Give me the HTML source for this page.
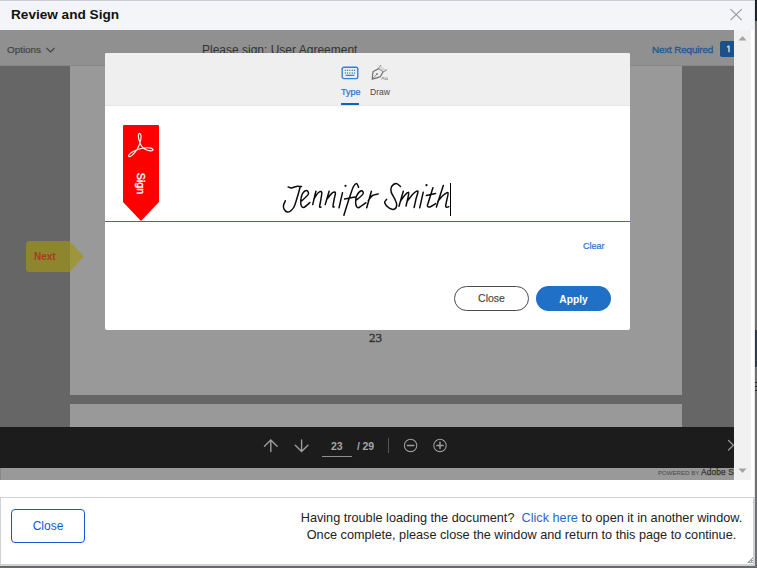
<!DOCTYPE html>
<html><head><meta charset="utf-8">
<style>
*{margin:0;padding:0;box-sizing:border-box;}
html,body{width:757px;height:568px;overflow:hidden;background:#fff;}
body{position:relative;font-family:"Liberation Sans",sans-serif;}
.a{position:absolute;}
</style></head><body>
<!-- window borders -->
<div class="a" style="left:0;top:0;width:757px;height:1px;background:#c9cdd4"></div>
<div class="a" style="left:0;top:1px;width:755px;height:29px;background:#f4f5f9"></div>
<div class="a" style="left:11px;top:5px;font-size:13.6px;font-weight:bold;color:#111;line-height:20px">Review and Sign</div>
<svg class="a" style="left:729px;top:8px" width="14" height="14" viewBox="0 0 14 14"><path d="M1.5 1.2L12.8 12.2M12.8 1.2L1.5 12.2" stroke="#9598a0" stroke-width="1.1" fill="none"/></svg>

<!-- content area -->
<div class="a" style="left:0;top:30px;width:734px;height:450px;background:#666;overflow:hidden">
  <div class="a" style="left:0;top:0;width:734px;height:36px;background:#909090;border-bottom:1px solid #878787"></div>
  <div class="a" style="left:7px;top:12.5px;font-size:9.9px;color:#444;line-height:14px;-webkit-text-stroke:.2px #444">Options</div>
  <svg class="a" style="left:45px;top:15.5px" width="11" height="8" viewBox="0 0 11 8"><path d="M1.5 2L5.5 6L9.5 2" stroke="#444" stroke-width="1.2" fill="none"/></svg>
  <div class="a" style="left:202px;top:12px;font-size:12px;color:#333;line-height:16px">Please sign: User Agreement</div>
  <div class="a" style="left:652px;top:13px;font-size:9.9px;-webkit-text-stroke:.3px #1f5792;color:#1f5792;line-height:14px;letter-spacing:-.15px">Next Required</div>
  <div class="a" style="left:720px;top:11px;width:22px;height:16px;background:#1c5088;border-radius:2px"></div><svg class="a" style="left:720px;top:11px" width="14" height="16" viewBox="0 0 14 16"><path d="M9 4.8V11.2M7.1 6.2L9 4.8" stroke="#c9d2de" stroke-width="1.45" fill="none"/></svg>

  <div class="a" style="left:70px;top:36px;width:612px;height:329px;background:#999"></div>
  <div class="a" style="left:70px;top:374px;width:612px;height:30px;background:#999"></div>
  <div class="a" style="left:369px;top:301px;font-family:'Liberation Serif',serif;font-size:13px;-webkit-text-stroke:.35px #333;color:#333;line-height:14px">23</div>

  <!-- Next tag -->
  <svg class="a" style="left:26px;top:211px" width="60" height="32" viewBox="0 0 60 32"><path d="M3.5 0H43.5L58 15.5L43.5 31H3.5Q0 31 0 27.5V3.5Q0 0 3.5 0Z" fill="rgb(160,148,24)" fill-opacity="0.7"/></svg>
  <div class="a" style="left:34px;top:219.5px;font-size:10px;font-weight:bold;color:#a83b1f;line-height:13px">Next</div>

  <!-- bottom toolbar -->
  <div class="a" style="left:0;top:397px;width:734px;height:41px;background:#1c1c1c"></div>
  <div class="a" style="left:0;top:438px;width:734px;height:12px;background:#999;border-left:1px solid #888"></div>
  <div class="a" style="left:658px;top:436px;font-size:6.1px;color:#4a4a4a;line-height:12px;white-space:nowrap">POWERED BY&nbsp;<span style="font-size:8.4px;color:#333;letter-spacing:.1px;-webkit-text-stroke:.25px #333">Adobe Sign</span></div>
</div>

<!-- scrollbar -->
<div class="a" style="left:734px;top:30px;width:17px;height:450px;background:#f1f1f1"></div>
<svg class="a" style="left:737px;top:34px" width="11" height="8" viewBox="0 0 11 8"><path d="M1.5 6.5L5.5 2L9.5 6.5Z" fill="#a3a3a3"/></svg>
<svg class="a" style="left:737px;top:467px" width="11" height="8" viewBox="0 0 11 8"><path d="M1.5 1.5L5.5 6L9.5 1.5Z" fill="#a3a3a3"/></svg>
<div class="a" style="left:755px;top:0;width:2px;height:568px;background:#707070"></div>
<div class="a" style="left:755px;top:0;width:2px;height:21px;background:#1b222c"></div>
<div class="a" style="left:755px;top:330px;width:2px;height:37px;background:#2b3b4b"></div>
<div class="a" style="left:755px;top:382px;width:2px;height:1px;background:#222"></div><div class="a" style="left:755px;top:386px;width:2px;height:1px;background:#222"></div><div class="a" style="left:755px;top:390px;width:2px;height:1px;background:#222"></div>
<div class="a" style="left:754px;top:1px;width:1px;height:496px;background:#e4e7ec"></div>

<!-- modal -->
<div class="a" style="left:105px;top:53px;width:525px;height:277px;background:#fff;border-radius:2px;overflow:hidden">
  <div class="a" style="left:0;top:0;width:525px;height:53px;background:#efefef;border-bottom:1px solid #e6e6e6"></div>
  <div class="a" style="left:236px;top:34px;font-size:9px;color:#2b6fcf;line-height:11px;-webkit-text-stroke:.2px #2b6fcf">Type</div>
  <div class="a" style="left:265px;top:34px;font-size:8.6px;color:#4b4b4b;line-height:11px">Draw</div>
  <div class="a" style="left:236px;top:50px;width:18px;height:2px;background:#0b63c5"></div>
  <div class="a" style="left:0;top:168px;width:525px;height:1px;background:#2170cc"></div>
  <div class="a" style="left:478px;top:187px;font-size:9px;color:#2b6fcf;line-height:13px;-webkit-text-stroke:.2px #2b6fcf">Clear</div>
  <div class="a" style="left:349px;top:233px;width:75px;height:25px;border:1px solid #4b4b4b;border-radius:13px;font-size:10.5px;color:#444;text-align:center;line-height:23px;-webkit-text-stroke:.15px #444">Close</div>
  <div class="a" style="left:431px;top:233px;width:75px;height:25px;background:#2170c8;border-radius:13px;font-size:10.2px;font-weight:bold;color:#fff;text-align:center;line-height:27px">Apply</div>
</div>

<!-- signature -->
<svg class="a" style="left:0;top:0" width="757" height="568" viewBox="0 0 757 568">
<path d="M288.1 186.9C288.7 187.1 290.1 188.1 291.5 188.0C292.9 187.9 294.8 186.6 296.5 186.4C298.2 186.2 300.7 186.6 301.5 186.6M300.1 187.2C299.7 188.7 298.6 192.9 297.6 196.2C296.6 199.5 295.3 204.3 294.1 206.8C292.9 209.3 291.8 210.1 290.6 211.0C289.4 211.9 288.1 212.3 287.0 212.0C285.9 211.7 284.5 210.0 283.9 208.9C283.3 207.8 283.3 206.8 283.5 205.4C283.7 204.1 285.0 201.6 285.3 200.8M301.8 200.8C302.9 199.7 307.5 196.0 308.3 194.3C309.1 192.6 307.6 190.7 306.6 190.6C305.6 190.5 303.5 192.1 302.5 193.7C301.5 195.3 301.0 198.3 300.8 200.4C300.6 202.5 300.9 204.9 301.5 206.1C302.1 207.2 302.9 207.9 304.3 207.3C305.7 206.7 309.0 203.3 309.9 202.5M315.9 191.3L312.7 204.6M313.8 199.0C314.6 197.9 317.2 193.6 318.5 192.5C319.8 191.4 321.3 190.9 321.7 192.3C322.1 193.7 321.0 198.7 320.6 201.1C320.2 203.5 319.5 205.8 319.6 206.8C319.7 207.8 320.8 207.1 321.0 207.1M329.1 191.3L325.2 204.6M326.6 199.7C327.5 198.6 330.5 194.4 332.0 193.2C333.5 192.0 335.1 191.6 335.4 192.7C335.7 193.8 334.4 197.7 334.0 200.0C333.6 202.3 333.0 205.2 333.0 206.4C333.0 207.6 334.0 206.9 334.2 207.0M342.5 192.7L339.0 207.8M358.6 187.3C358.3 186.7 357.5 183.5 356.6 183.4C355.8 183.3 354.7 184.1 353.5 186.5C352.3 188.9 351.1 192.8 349.5 197.6C347.9 202.4 344.8 212.3 343.9 215.2M344.6 199.0L355.0 196.9M355.9 200.5C357.1 199.4 362.1 195.6 363.0 194.0C363.9 192.4 362.4 190.5 361.3 190.8C360.2 191.1 357.6 193.9 356.6 195.8C355.7 197.7 355.6 200.3 355.6 202.1C355.6 203.9 355.9 205.6 356.5 206.5C357.1 207.4 357.4 208.1 359.0 207.5C360.6 206.9 364.8 203.6 365.9 202.8M371.4 191.2L366.7 207.8M368.3 200.5C369.0 199.7 370.8 196.6 372.5 195.5C374.2 194.4 377.3 194.2 378.3 193.9M400.5 186.5C399.8 186.0 397.8 183.4 396.3 183.4C394.8 183.4 392.5 185.1 391.6 186.5C390.8 187.9 390.7 189.9 391.2 192.0C391.7 194.1 393.8 196.8 394.7 198.9C395.6 201.0 396.7 202.7 396.7 204.4C396.7 206.1 395.9 208.4 394.7 209.0C393.5 209.6 391.0 209.2 389.3 208.2C387.6 207.2 385.1 204.3 384.7 202.8C384.2 201.3 386.3 199.9 386.6 199.3M403.3 191.2L399.0 206.3M400.9 200.5C401.7 199.5 404.2 195.8 405.5 194.5C406.8 193.2 408.4 191.7 408.7 192.7C409.0 193.7 407.8 198.3 407.3 200.5C406.9 202.7 406.2 205.1 406.0 206.0M407.1 201.3C408.2 200.0 411.7 195.2 413.5 193.5C415.3 191.8 417.6 190.3 418.0 191.2C418.4 192.1 416.6 196.3 416.0 199.0C415.4 201.7 414.4 206.1 414.1 207.5M423.2 192.3L419.7 207.8M432.9 187.7C432.2 190.1 429.4 199.0 428.5 202.0C427.6 205.0 427.2 205.1 427.4 205.9C427.6 206.7 428.4 207.4 429.8 207.0C431.2 206.6 434.6 204.2 435.6 203.6M426.3 195.4L435.6 193.5M443.3 185.4L436.4 207.1M437.9 201.3C438.8 200.2 441.8 196.4 443.5 195.0C445.2 193.6 447.4 191.9 448.0 192.7C448.6 193.5 447.2 197.9 446.8 200.0C446.4 202.1 445.8 204.3 445.7 205.5C445.6 206.7 446.0 207.1 446.5 207.3C447.0 207.5 448.4 206.8 448.8 206.7" fill="none" stroke="#0a0a0a" stroke-width="1.5" stroke-linecap="round" stroke-linejoin="round"/>
<circle cx="345.5" cy="185.8" r="1.1" fill="#0a0a0a"/><circle cx="426.5" cy="185.2" r="1.1" fill="#0a0a0a"/>
<rect x="450" y="183" width="1" height="33" fill="#000"/>
</svg>
<!-- sign banner -->
<svg class="a" style="left:123px;top:125px" width="36" height="96" viewBox="0 0 36 96">
<path d="M1 0H35Q36 0 36 1V77L18 96L0 77V1Q0 0 1 0Z" fill="#fe0000"/>
<path d="M16.4 8.2C16.6 8.5 17.7 8.9 17.9 10.0C18.1 11.1 18.1 12.8 17.8 14.5C17.5 16.2 17.0 18.1 16.2 20.0C15.4 21.9 14.3 24.2 13.2 25.8C12.1 27.4 10.6 28.8 9.5 29.8C8.4 30.8 7.5 31.4 6.8 31.6C6.1 31.8 5.6 31.4 5.6 31.0C5.6 30.6 5.8 29.9 6.6 29.2C7.4 28.5 8.7 27.4 10.2 26.6C11.7 25.8 13.7 24.9 15.5 24.3C17.3 23.7 19.2 23.2 21.0 23.0C22.8 22.8 25.0 22.7 26.5 22.9C28.0 23.1 29.5 23.8 29.9 24.3C30.3 24.8 29.7 25.5 28.8 25.7C27.9 25.9 25.9 25.8 24.5 25.3C23.1 24.8 21.3 23.8 20.2 22.8C19.1 21.8 18.3 20.9 17.6 19.4C16.9 17.9 16.2 15.6 15.8 14.0C15.4 12.4 15.3 11.0 15.4 10.0C15.5 9.0 16.2 8.5 16.4 8.2" fill="none" stroke="#fff" stroke-width="1.1"/>
</svg>
<div class="a" style="left:128.5px;top:177px;width:22px;height:13px;transform:rotate(90deg);transform-origin:11px 6.5px;font-size:10.8px;color:#fff;-webkit-text-stroke:.35px #fff;line-height:13px;text-align:center">Sign</div>
<!-- type/draw icons -->
<svg class="a" style="left:341px;top:66px" width="18" height="14" viewBox="0 0 18 14">
<rect x="1.2" y="1.2" width="15.6" height="11.4" rx="1.8" fill="none" stroke="#3b80d0" stroke-width="1.4"/>
<g fill="#3b80d0"><rect x="3.80" y="3.70" width="1.2" height="1.3"/><rect x="5.90" y="3.70" width="1.2" height="1.3"/><rect x="8.20" y="3.70" width="1.2" height="1.3"/><rect x="10.70" y="3.70" width="1.2" height="1.3"/><rect x="12.90" y="3.70" width="1.2" height="1.3"/><rect x="3.80" y="6.40" width="1.2" height="1.3"/><rect x="5.90" y="6.40" width="1.2" height="1.3"/><rect x="8.20" y="6.40" width="1.2" height="1.3"/><rect x="10.70" y="6.40" width="1.2" height="1.3"/><rect x="12.90" y="6.40" width="1.2" height="1.3"/><rect x="4.6" y="8.8" width="8.8" height="1.3" rx=".6"/></g>
</svg>
<svg class="a" style="left:366px;top:60px" width="28" height="24" viewBox="366 60 28 24">
<path d="M372.2 79.2Q372.5 74 373.2 71.5L378.7 68.6L380.6 65.8M378.7 68.6L383.2 71.6L380.3 76.7Q376 78.5 372.2 79.2M383.2 71.6L386.3 70" fill="none" stroke="#757575" stroke-width="1.25" stroke-linejoin="round" stroke-linecap="round"/><path d="M372.4 79L376.8 74.3" stroke="#757575" stroke-width=".9" fill="none"/>
<path d="M380.4 66L386.5 70L383.2 71.6L378.7 68.6Z" fill="#d6d6d6"/>
<circle cx="377" cy="74" r=".9" fill="#7a7a7a"/>
<path d="M381.5 79.5L383 77M383 77L384 79.5M385 77.2L385 79.5L386.5 79.3M387 77.2L387 79.5L388 79.3" fill="none" stroke="#8a8a8a" stroke-width=".8"/>
</svg>
<!-- bottom toolbar icons -->
<svg class="a" style="left:0;top:0" width="757" height="568" viewBox="0 0 757 568">
<g fill="none" stroke="#9c9c9c" stroke-width="1.4" stroke-linecap="round">
<path d="M270.8 440.5V451.5M264.5 446.2L270.8 440L277.1 446.2"/>
<path d="M301.6 440V451M295.3 445.3L301.6 451.6L307.9 445.3"/>
<circle cx="410.6" cy="445.4" r="6.2" stroke-width="1.1"/>
<circle cx="440" cy="445.4" r="6.2" stroke-width="1.1"/>
<path d="M407.4 445.4H413.8M436.9 445.4H443.1M440 442.2V448.6" stroke-width="1.5"/>
<path d="M728.5 440.5L733.5 445.3L728.5 450" stroke-width="1.2"/>
</g>
<rect x="388" y="438" width="1" height="15" fill="#555"/>
<rect x="322" y="456" width="30" height="1" fill="#8f8f8f"/>
</svg>
<div class="a" style="left:331px;top:440px;font-size:10.5px;font-weight:bold;color:#a6a6a6;line-height:12px">23</div>
<div class="a" style="left:357px;top:440px;font-size:10.5px;font-weight:bold;color:#a6a6a6;line-height:12px">/</div><div class="a" style="left:362.5px;top:440px;font-size:10.5px;font-weight:bold;color:#a6a6a6;line-height:12px">29</div>

<!-- footer -->
<div class="a" style="left:0;top:497px;width:755px;height:69px;border:1px solid #cdd1d8;border-right-width:2px;border-bottom-width:2px;background:#fff"></div>
<svg class="a" style="left:746px;top:556px" width="8" height="8" viewBox="0 0 8 8"><path d="M7 1V7H1Z" fill="#9aa0a8"/><path d="M6 3h1v1h-1zM4 5h1v1h-1zM6 5h1v1h-1z" fill="#fff"/></svg>
<div class="a" style="left:11px;top:509px;width:74px;height:34px;border:1px solid #1456d0;border-radius:4px;font-size:12px;color:#1456d0;text-align:center;line-height:32px">Close</div>
<div class="a" style="left:290px;top:510px;width:463px;font-size:12.7px;color:#222;text-align:center;line-height:17px">Having trouble loading the document?&nbsp; <span style="color:#2f64c6">Click here</span> to open it in another window.<br>Once complete, please close the window and return to this page to continue.</div>
<div class="a" style="left:0;top:566px;width:757px;height:2px;background:#6a6a6a"></div>
</body></html>
